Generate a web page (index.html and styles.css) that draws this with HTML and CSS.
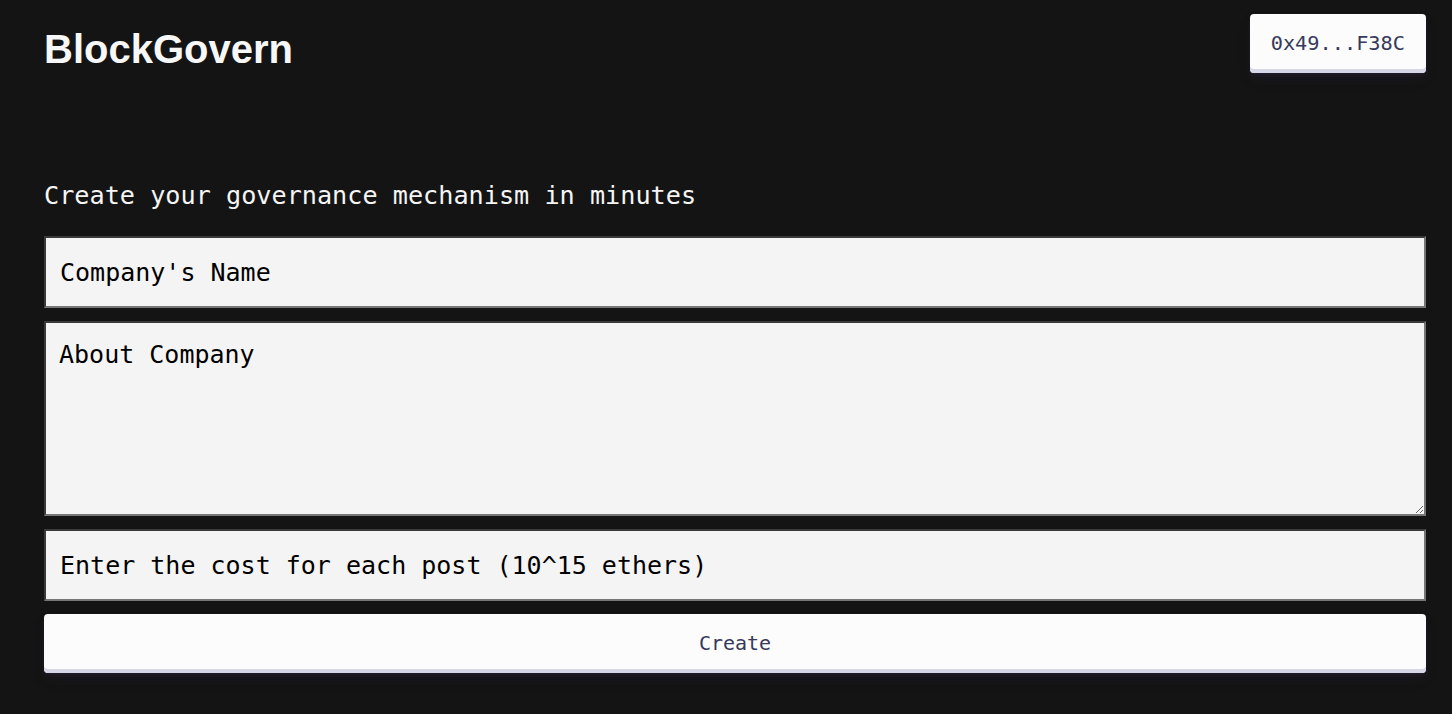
FILE: index.html
```html
<!DOCTYPE html>
<html lang="en">
<head>
<meta charset="utf-8">
<title>BlockGovern</title>
<link rel="stylesheet" href="styles.css">
</head>
<body>
<header class="header">
  <h1 class="brand">BlockGovern</h1>
  <button class="btn wallet">0x49...F38C</button>
</header>
<main class="main">
  <p class="tagline">Create your governance mechanism in minutes</p>
  <form class="form">
    <input class="field" type="text" placeholder="Company's Name">
    <textarea class="field area" placeholder="About Company"></textarea>
    <input class="field" type="text" placeholder="Enter the cost for each post (10^15 ethers)">
    <button class="btn create" type="button">Create</button>
  </form>
</main>
</body>
</html>
```

FILE: styles.css
```css
html, body {
  margin: 0;
  background: #141414;
  height: 100%;
}
body {
  padding: 0 26px 0 44px;
  box-sizing: border-box;
  font-family: "DejaVu Sans Mono", monospace;
}
.header {
  display: flex;
  justify-content: space-between;
  align-items: flex-start;
}
.brand {
  margin: 26px 0 0;
  font-family: "Liberation Sans", Arial, sans-serif;
  font-weight: 700;
  font-size: 40px;
  line-height: 46px;
  color: #f7f7f7;
}
.btn {
  font-family: "DejaVu Sans Mono", monospace;
  font-size: 20px;
  color: #36395a;
  background: #fcfcfd;
  border: 0;
  border-radius: 4px;
  box-shadow: rgba(45, 35, 66, 0.4) 0 2px 4px, rgba(45, 35, 66, 0.3) 0 7px 13px -3px, #d6d6e7 0 -4px 0 inset;
  cursor: pointer;
}
.wallet {
  margin-top: 14px;
  height: 59px;
  padding: 0 21px 2px;
  font-size: 20.3px;
}
.main {
  margin-top: 108px;
}
.tagline {
  margin: 0 0 26px;
  font-size: 25.2px;
  line-height: 29px;
  color: #f5f5f5;
}
.form {
  display: flex;
  flex-direction: column;
  gap: 13px;
}
.field {
  box-sizing: border-box;
  width: 100%;
  height: 72px;
  margin: 0;
  padding: 0 14px;
  font-family: "DejaVu Sans Mono", monospace;
  font-size: 25px;
  color: #000;
  background: #f4f4f4;
  border: 2px solid;
  border-color: #3a3a3a #767676 #767676 #3a3a3a;
  border-radius: 0;
  outline: none;
}
.field::placeholder {
  color: #000;
  opacity: 1;
}
.area {
  height: 195px;
  padding: 17px 13px;
  line-height: 29px;
  resize: vertical;
}
.create {
  width: 100%;
  height: 59px;
  padding: 0 0 2px;
}
```
